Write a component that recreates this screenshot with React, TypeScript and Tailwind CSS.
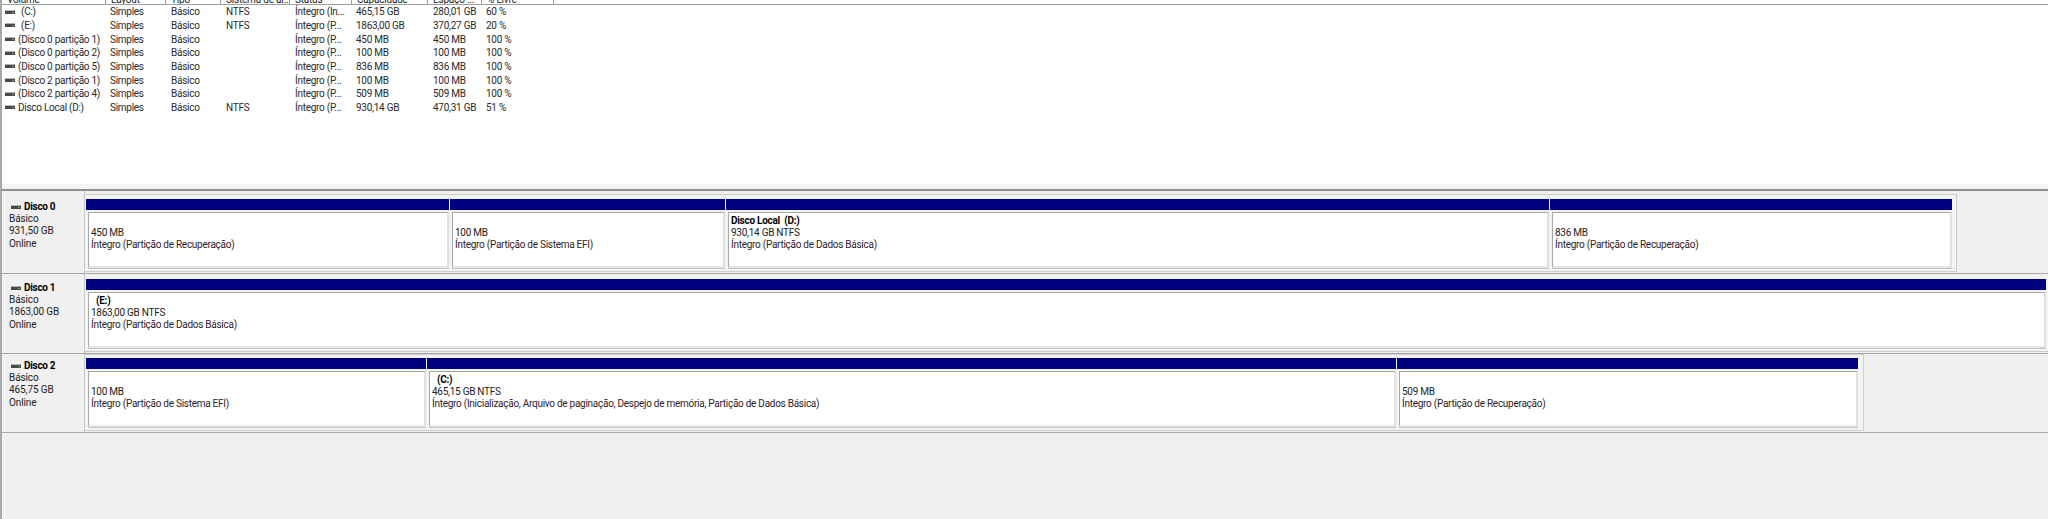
const font = { fontFamily: 'Roboto, "Noto Sans", sans-serif' };

const cols = [104, 60, 55, 69, 62, 76, 54, 72];
const pads = [3, 4, 5, 5, 5, 4, 5, 4];
const headers = ["Volume", "Layout", "Tipo", "Sistema de ar...", "Status", "Capacidade", "Espaço ...", "% Livre"];
const rows = [
  ["(C:)", "Simples", "Básico", "NTFS", "Íntegro (In...", "465,15 GB", "280,01 GB", "60 %"],
  ["(E:)", "Simples", "Básico", "NTFS", "Íntegro (P...", "1863,00 GB", "370,27 GB", "20 %"],
  ["(Disco 0 partição 1)", "Simples", "Básico", "", "Íntegro (P...", "450 MB", "450 MB", "100 %"],
  ["(Disco 0 partição 2)", "Simples", "Básico", "", "Íntegro (P...", "100 MB", "100 MB", "100 %"],
  ["(Disco 0 partição 5)", "Simples", "Básico", "", "Íntegro (P...", "836 MB", "836 MB", "100 %"],
  ["(Disco 2 partição 1)", "Simples", "Básico", "", "Íntegro (P...", "100 MB", "100 MB", "100 %"],
  ["(Disco 2 partição 4)", "Simples", "Básico", "", "Íntegro (P...", "509 MB", "509 MB", "100 %"],
  ["Disco Local (D:)", "Simples", "Básico", "NTFS", "Íntegro (P...", "930,14 GB", "470,31 GB", "51 %"],
];

function Drive() {
  return (
    <svg width="10" height="4" viewBox="0 0 10 4" className="shrink-0">
      <rect x="0" y="0" width="10" height="1" fill="#b4b4b4" />
      <rect x="0" y="1" width="10" height="3" fill="#484848" />
      <rect x="7" y="2" width="2" height="1" fill="#3fc04a" />
    </svg>
  );
}

type Part = { w: number; title?: string; size: string; status: string; titleIndent?: boolean };

function Partition({ p }: { p: Part }) {
  return (
    <div className="flex flex-col shrink-0 h-full pr-[1px]" style={{ width: p.w }}>
      <div className="h-[11px] bg-[#000080] shrink-0" />
      <div className="h-[2px] shrink-0" />
      <div className="flex-1 min-h-0 ml-[2px] border-b border-[#c4c4c4]">
        <div className="h-full bg-white border-t border-l border-[#a8a8a8] border-r-2 border-r-[#e0e0e0] border-b-2 border-b-[#e6e6e6] pl-[2px] pt-[2px] text-[10px] leading-[12.2px] tracking-[-0.27px] text-[#222]">
          <div className="h-[12.2px] font-bold text-black whitespace-pre">
            {p.title ? <span className={p.titleIndent ? "pl-[5px]" : ""}>{p.title}</span> : null}
          </div>
          <div>{p.size}</div>
          <div className="text-[#2e1c2a]">{p.status}</div>
        </div>
      </div>
    </div>
  );
}

function Disk({ name, size, parts, h, frame, outer, inner }: { name: string; size: string; parts: Part[]; h: number; frame: number | null; outer: number; inner: number }) {
  return (
    <div className="flex border-b border-[#a8a8a8] shrink-0" style={{ height: h }}>
      <div
        className="w-[83px] shrink-0 bg-[#f0f0f0] border-r border-[#c8c8c8] pl-[7px] text-[10px] leading-[12.2px] tracking-[-0.1px] text-[#222]"
        style={{ paddingTop: outer + inner + 3 }}
      >
        <div className="flex items-center font-bold h-[12.2px] text-black tracking-[-0.3px]">
          <span className="ml-[2px]">
            <Drive />
          </span>
          <span className="ml-[3px]">{name}</span>
        </div>
        <div>Básico</div>
        <div>{size}</div>
        <div>Online</div>
      </div>
      <div className="flex-1 min-w-0 pb-[1px]" style={{ paddingTop: outer }}>
        <div
          className="flex h-full pl-[1px] pb-[2px] border-b border-[#c8c8c8] bg-[#f3f3f3]"
          style={
            frame === null
              ? { paddingTop: inner }
              : { paddingTop: inner, width: frame, borderRightWidth: 1, borderTopWidth: 1, borderColor: "#cfcfcf" }
          }
        >
          {parts.map((p, i) => (
            <Partition key={i} p={p} />
          ))}
        </div>
      </div>
    </div>
  );
}

export default function App() {
  return (
    <div className="w-[2048px] h-[519px] overflow-hidden bg-[#f0f0f0] border-l-2 border-[#a8a8a8] flex flex-col" style={font}>
      <div className="h-[184px] bg-white flex flex-col shrink-0">
        <div className="h-[5px] flex overflow-hidden border-b border-[#a0a0a0] shrink-0">
          {cols.map((w, i) => (
            <div key={i} className="shrink-0 h-[4px] overflow-hidden relative border-r border-[#a0a0a0]" style={{ width: w }}>
              <span className="absolute left-[5px] bottom-[-2px] text-[10px] leading-[12px] tracking-[-0.2px] whitespace-nowrap text-[#222]">{headers[i]}</span>
            </div>
          ))}
        </div>
        <div>
          {rows.map((r, i) => (
            <div key={i} className="flex h-[13.65px] items-center text-[10px] leading-[13px] tracking-[-0.27px] text-[#2a2a2a] whitespace-nowrap">
              {r.map((c, j) => (
                <div key={j} className="shrink-0 flex items-center" style={{ width: cols[j], paddingLeft: pads[j] }}>
                  {j === 0 && <Drive />}
                  {j === 0 ? (
                    <span className={c.startsWith("(D") || c.startsWith("Disco") ? "ml-[3px]" : "ml-[6px]"}>{c}</span>
                  ) : (
                    c
                  )}
                </div>
              ))}
            </div>
          ))}
        </div>
      </div>
      <div className="h-[5px] shrink-0 bg-[#f4f4f4]" />
      <div className="h-[2px] shrink-0 bg-[#8f8f8f]" />
      <Disk
        name="Disco 0"
        size="931,50 GB"
        h={83}
        frame={1872}
        outer={3}
        inner={4}
        parts={[
          { w: 364, size: "450 MB", status: "Íntegro (Partição de Recuperação)" },
          { w: 276, size: "100 MB", status: "Íntegro (Partição de Sistema EFI)" },
          { w: 824, title: "Disco Local  (D:)", size: "930,14 GB NTFS", status: "Íntegro (Partição de Dados Básica)" },
          { w: 403, size: "836 MB", status: "Íntegro (Partição de Recuperação)" },
        ]}
      />
      <Disk
        name="Disco 1"
        size="1863,00 GB"
        h={80}
        frame={null}
        outer={2}
        inner={3}
        parts={[{ w: 1961, title: "(E:)", titleIndent: true, size: "1863,00 GB NTFS", status: "Íntegro (Partição de Dados Básica)" }]}
      />
      <Disk
        name="Disco 2"
        size="465,75 GB"
        h={79}
        frame={1779}
        outer={0}
        inner={3}
        parts={[
          { w: 341, size: "100 MB", status: "Íntegro (Partição de Sistema EFI)" },
          { w: 970, title: "(C:)", titleIndent: true, size: "465,15 GB NTFS", status: "Íntegro (Inicialização, Arquivo de paginação, Despejo de memória, Partição de Dados Básica)" },
          { w: 462, size: "509 MB", status: "Íntegro (Partição de Recuperação)" },
        ]}
      />
    </div>
  );
}
